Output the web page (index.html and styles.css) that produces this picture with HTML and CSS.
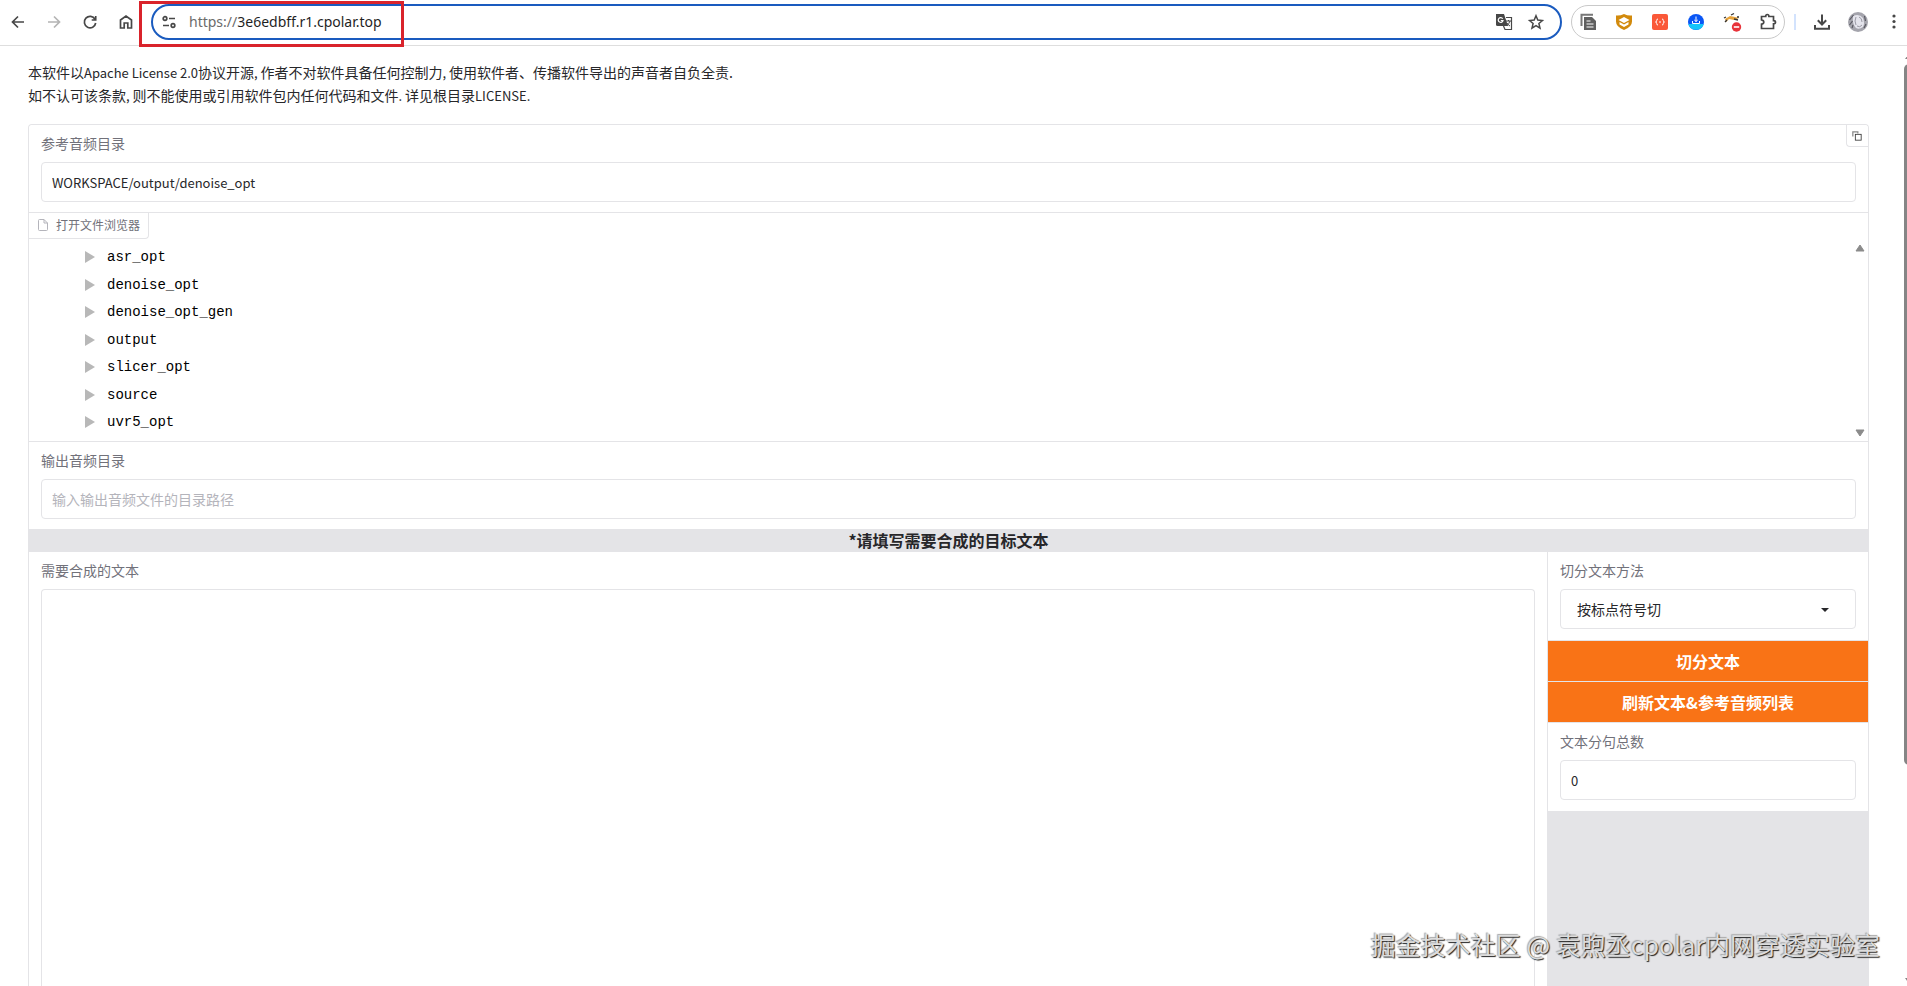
FILE: index.html
```
<!DOCTYPE html>
<html lang="zh-CN">
<head>
    <meta charset="UTF-8">
    <meta name="viewport" content="width=device-width, initial-scale=1.0">
    <title>3e6edbff.r1.cpolar.top</title>
    <link rel="stylesheet" href="styles.css">
</head>
<body>
    <header class="toolbar">
        <button class="icon-btn" aria-label="Back"><svg viewBox="0 0 20 20"><path d="M16 10H4.500M10 4.500L4.500 10l5.500 5.500"/></svg></button>
        <button class="icon-btn disabled" aria-label="Forward"><svg viewBox="0 0 20 20"><path d="M4 10h11.500M10 4.500l5.500 5.500-5.500 5.500"/></svg></button>
        <button class="icon-btn" aria-label="Reload"><svg viewBox="0 0 20 20"><path d="M15 7.200A5.700 5.700 0 1 0 15.700 11M15.700 4v4h-4"/></svg></button>
        <button class="icon-btn" aria-label="Home"><svg viewBox="0 0 20 20"><path d="M4.500 16V8L10 4l5.500 4v8h-3.700v-5H8.200v5z"/></svg></button>
        <div class="omnibox">
            <svg class="icon" viewBox="0 0 20 20"><circle cx="6" cy="6.500" r="1.800"/><path d="M10 6.500h6M4 13.500h6"/><circle cx="14" cy="13.500" r="1.800"/></svg>
            <div class="url" contenteditable="true" role="textbox" aria-label="Address" spellcheck="false"><span class="scheme">https://</span>3e6edbff.r1.cpolar.top</div>
            <button class="icon-btn" aria-label="Translate"><svg viewBox="0 0 20 20"><path d="M2 2h8l4 12H3.500Q2 14 2 12.500z" fill="#474747" stroke="none"/><path d="M12 5.500h5.500v12H11l-1.500-3.500" stroke-width="1.200"/><path d="M8.700 6.700A2.400 2.400 0 1 0 9 8.500H6.800" stroke="#fff" stroke-width="1.200"/><path d="M12 9h5M14.500 8v1M16 9q-1 3-3.500 5M13 11q1 2 3 3" stroke-width="1"/></svg></button>
            <button class="icon-btn" aria-label="Bookmark"><svg viewBox="0 0 20 20"><path d="M10 3.800l1.800 4.300 4.600.4-3.500 3 1.100 4.600-4-2.500-4 2.500 1.100-4.600-3.500-3 4.600-.4z" stroke-width="1.500"/></svg></button>
        </div>
        <div class="extensions">
            <button class="icon-btn" aria-label="Copy pages"><svg viewBox="0 0 20 20"><path d="M3.500 14V2.800H15" stroke="#777" stroke-width="2"/><path d="M6 5h8l4 4v9H6z" fill="#606060" stroke="none"/><path d="M8.500 9h4M8.500 12h7M8.500 15h7" stroke="#fff" stroke-width="1.200"/></svg></button>
            <button class="icon-btn" aria-label="Shield"><svg viewBox="0 0 20 20"><path d="M2 3.500Q6 4 10 2q4 2 8 1.500v6q0 5.500-8 8.500-8-3-8-8.500z" fill="#d28a0c" stroke="none"/><path d="M10 5l5.500 3-5.500 3-5.500-3z" fill="#fff" stroke="none"/><path d="M5.500 10v2.500l4.500 2.500 4.500-2.500V10L10 12.500z" fill="#fff" stroke="none"/></svg></button>
            <button class="icon-btn" aria-label="JSON"><svg viewBox="0 0 20 20"><rect x="2" y="2" width="16" height="16" rx="2" fill="#fa5838" stroke="none"/><path d="M8 7Q6.500 7 6.700 8.500 6.700 10 5.500 10q1.200 0 1.200 1.500Q6.500 13 8 13M12 7q1.500 0 1.300 1.500 0 1.500 1.200 1.500-1.200 0-1.200 1.500.2 1.500-1.300 1.500M9 10h2" stroke="#fff" stroke-width="1"/></svg></button>
            <button class="icon-btn" aria-label="Downloader"><svg viewBox="0 0 20 20"><circle cx="10" cy="10" r="8" fill="#0a56f5" stroke="none"/><path d="M2.300 12h15.400a8 8 0 0 1-15.400 0z" fill="#13c5fa" stroke="none"/><path d="M10 4.500v5M8.300 8L10 9.500 11.700 8M6.500 9v2.500h7V9" stroke="#fff" stroke-width="1"/></svg></button>
            <button class="icon-btn" aria-label="Blocker"><svg viewBox="0 0 20 20"><path d="M3 7l5-3 5 1 4 1-5 2-5-1-3 3z" fill="#e8a33a" stroke="none"/><path d="M2 6l2-1M9 3l3-1.500M3 10l2-2M15 5h2M12 7l4 1" stroke="#333" stroke-width="1.300"/><circle cx="14.500" cy="15" r="4.700" fill="#e8333a" stroke="none"/><path d="M11.800 15h5.400" stroke="#fff" stroke-width="1.600"/></svg></button>
            <button class="icon-btn" aria-label="Extensions"><svg viewBox="0 0 20 20"><path d="M3.500 4.500h4.200q0-2 1.600-2t1.600 2h4.600v4.200q2 0 2 1.600t-2 1.600v4.600h-12v-4.300q2.300-.4 2.300-2.200t-2.300-2.200z"/></svg></button>
        </div>
        <span class="separator"></span>
        <button class="icon-btn" aria-label="Downloads"><svg viewBox="0 0 20 20"><path d="M10 2.500v10M5.800 8.300l4.200 4.200 4.200-4.200M3 13v3.700h14V13" stroke-width="2"/></svg></button>
        <button class="icon-btn" aria-label="Profile"><svg viewBox="0 0 20 20"><circle cx="10" cy="10" r="10" fill="#a4a4ac" stroke="none"/><path d="M5 4q6-3 10 2 2 5 0 9-4 3-7 1-4-4-3-12z" fill="#e4e4ec" stroke="none"/><path d="M1.500 8l4-5M1.500 13l3-4M4 16l1-3M16.500 4l1 5M18 12l-2 4" stroke="#5a5a63" stroke-width="1.200"/><path d="M8 5q-2 4 0 8M11 5q3 1 3 5M9 14q3 2 5-1" stroke="#9a9aa4" stroke-width="1"/></svg></button>
        <button class="icon-btn" aria-label="Menu"><svg viewBox="0 0 20 20"><g fill="#474747" stroke="none"><circle cx="10" cy="4" r="1.600"/><circle cx="10" cy="9.500" r="1.600"/><circle cx="10" cy="15" r="1.600"/></g></svg></button>
        <span class="highlight"></span>
    </header>

    <div class="viewport">
        <main class="page">
            <p class="notice">本软件以<span class="latin">Apache License 2.0</span>协议开源<span class="latin">, </span>作者不对软件具备任何控制力<span class="latin">, </span>使用软件者、传播软件导出的声音者自负全责.<br>如不认可该条款<span class="latin">, </span>则不能使用或引用软件包内任何代码和文件<span class="latin">. </span>详见根目录<span class="latin">LICENSE.</span></p>

            <div class="panel">
                <div class="field ref-dir">
                    <label for="ref-dir">参考音频目录</label>
                    <input type="text" id="ref-dir" class="latin" value="WORKSPACE/output/denoise_opt">
                    <button class="copy-btn" aria-label="Copy"><svg viewBox="0 0 12 12"><path d="M1 6.500V1h6v2" fill="none" stroke="#888" stroke-width="1.500"/><rect x="4" y="4" width="7" height="7" fill="#fff" stroke="#333"/></svg></button>
                </div>

                <div class="explorer">
                    <div class="explorer-label">
                        <svg viewBox="0 0 12 14"><path d="M1.500 2.500q0-1 1-1H7l3.500 3.500v6.500q0 1-1 1h-7q-1 0-1-1zM7 1.500V5h3.500"/></svg>
                        打开文件浏览器
                    </div>
                    <div class="explorer-body">
                        <ul class="tree">
                            <li>asr_opt</li>
                            <li>denoise_opt</li>
                            <li>denoise_opt_gen</li>
                            <li>output</li>
                            <li>slicer_opt</li>
                            <li>source</li>
                            <li>uvr5_opt</li>
                        </ul>
                        <div class="tree-scroll">
                            <svg viewBox="0 0 10 8"><path d="M5 1l4 6H1z"/></svg>
                            <svg viewBox="0 0 10 8"><path d="M5 7L1 1h8z"/></svg>
                        </div>
                    </div>
                </div>

                <div class="field">
                    <label for="out-dir">输出音频目录</label>
                    <input type="text" id="out-dir" placeholder="输入输出音频文件的目录路径">
                </div>

                <h3 class="band">*请填写需要合成的目标文本</h3>

                <div class="columns">
                    <div class="field text-col">
                        <label for="target-text">需要合成的文本</label>
                        <textarea id="target-text"></textarea>
                    </div>
                    <div class="side-col">
                        <div class="field">
                            <label for="cut-method">切分文本方法</label>
                            <div class="select-wrap">
                                <select id="cut-method">
                                    <option>按标点符号切</option>
                                </select>
                                <svg viewBox="0 0 10 6"><path d="M1 1h8L5 5z"/></svg>
                            </div>
                        </div>
                        <button class="primary">切分文本</button>
                        <button class="primary">刷新文本&amp;参考音频列表</button>
                        <div class="field">
                            <label for="count">文本分句总数</label>
                            <input type="text" id="count" class="latin" value="0">
                        </div>
                    </div>
                </div>
            </div>
        </main>
        <div class="scrollbar">
            <svg viewBox="0 0 12 8"><path d="M6 0l5 7H1z"/></svg>
            <div class="track"><div class="thumb"></div></div>
            <svg viewBox="0 0 12 8"><path d="M6 7L1 0h10z"/></svg>
        </div>
    </div>

    <div class="watermark">掘金技术社区 @ 袁煦丞cpolar内网穿透实验室</div>
</body>
</html>
```
FILE: styles.css
```
* {
    box-sizing: border-box;
}
body {
    margin: 0;
    height: 100vh;
    overflow: hidden;
    display: flex;
    flex-direction: column;
    background: #fff;
    color: #27272a;
    font-family: "Noto Sans CJK SC", sans-serif;
    font-size: 14px;
}
button, input, select, textarea {
    font: inherit;
    color: inherit;
}

/* latin glyphs run large next to the chinese ones */
.latin {
    font-size: 13px;
}

/* browser bar */
.toolbar {
    position: relative;
    flex: none;
    display: flex;
    align-items: center;
    gap: 16px;
    height: 46px;
    padding: 0 3px 2px 8px;
    border-bottom: 1px solid #dedede;
}
.icon-btn {
    flex: none;
    width: 20px;
    height: 20px;
    padding: 0;
    border: 0;
    background: none;
}
.icon-btn svg, .icon {
    display: block;
    width: 20px;
    height: 20px;
    fill: none;
    stroke: #474747;
    stroke-width: 1.7;
}
.disabled svg {
    stroke: #b4b4b4;
}
.omnibox {
    flex: 1;
    display: flex;
    align-items: center;
    gap: 10px;
    height: 36px;
    margin: 0 -7px 0 -1px;
    padding: 0 14px 0 6px;
    border: 2px solid #1a5bbf;
    border-radius: 18px;
}
.url {
    flex: 1;
    font-family: "Noto Sans", sans-serif;
    font-size: 14px;
    line-height: 20px;
    color: #1f1f1f;
    outline: none;
}
.scheme {
    color: #6b6b6b;
}
.omnibox .icon-btn + .icon-btn {
    margin-left: 2px;
}
.extensions {
    flex: none;
    display: flex;
    align-items: center;
    gap: 16px;
    height: 34px;
    margin-right: -7px;
    padding: 0 6px;
    border: 1px solid #c9c9c9;
    border-radius: 17px;
}
.separator {
    width: 2px;
    height: 16px;
    background: #d3e3fd;
}
.highlight {
    position: absolute;
    left: 139px;
    top: 1px;
    width: 265px;
    height: 46px;
    border: 3px solid #d9232b;
    pointer-events: none;
}

/* page */
.viewport {
    flex: 1;
    min-height: 0;
    display: flex;
}
.page {
    flex: 1;
    min-width: 0;
    display: flex;
    flex-direction: column;
    padding: 15px 35px 0 28px;
}
.notice {
    margin: 0 0 17px;
    line-height: 23px;
}
.panel {
    flex: 1;
    min-height: 0;
    display: flex;
    flex-direction: column;
    border: 1px solid #e4e4e7;
    border-bottom: 0;
    border-radius: 4px 4px 0 0;
}
.field {
    display: flex;
    flex-direction: column;
    gap: 9px;
    padding: 8px 12px 10px;
    background: #fff;
}
.field label {
    line-height: 20px;
    color: #71717a;
}
.field input, .field textarea, .field select {
    display: block;
    width: 100%;
    height: 40px;
    padding: 0 10px;
    border: 1px solid #e4e4e7;
    border-radius: 4px;
    background: #fff;
    outline: none;
}
.field .latin {
    font-size: 13px;
}
.field input::placeholder {
    color: #b4b4bb;
}
.ref-dir {
    position: relative;
    border-radius: 4px 4px 0 0;
}
.copy-btn {
    position: absolute;
    top: 0;
    right: 0;
    width: 22px;
    height: 22px;
    padding: 5px;
    border: solid #e4e4e7;
    border-width: 0 0 1px 1px;
    border-radius: 0 4px 0 4px;
    background: #fff;
}
.copy-btn svg {
    display: block;
    width: 10px;
    height: 10px;
}

/* file explorer */
.explorer {
    border: solid #e4e4e7;
    border-width: 1px 0;
}
.explorer-label {
    display: flex;
    align-items: center;
    gap: 7px;
    width: max-content;
    height: 26px;
    padding: 0 8px 2px;
    border: solid #e4e4e7;
    border-width: 0 1px 1px 0;
    border-radius: 0 0 4px 0;
    font-size: 12px;
    color: #71717a;
}
.explorer-label svg {
    width: 12px;
    height: 14px;
    fill: none;
    stroke: #b4b4bb;
}
.explorer-body {
    display: flex;
    justify-content: space-between;
    height: 202px;
}
.tree {
    display: flex;
    flex-direction: column;
    justify-content: space-between;
    margin: 0;
    padding: 8px 0 9px 56px;
    list-style: none;
    font-family: "Liberation Mono", monospace;
    line-height: 20px;
    color: #000;
}
.tree li {
    display: flex;
    align-items: center;
    gap: 12px;
}
.tree li::before {
    content: "";
    border: solid transparent;
    border-width: 6px 0 6px 10px;
    border-left-color: #b8b8b8;
}
.tree-scroll {
    display: flex;
    flex-direction: column;
    justify-content: space-between;
    padding: 5px 3px 4px;
}
.tree-scroll svg {
    width: 10px;
    height: 8px;
    fill: #8b8b8b;
    stroke: #8b8b8b;
    stroke-linejoin: round;
}

/* synthesis text */
.band {
    margin: 0;
    background: #e4e4e7;
    font-size: 16px;
    font-weight: 700;
    line-height: 22px;
    text-align: center;
}
.columns {
    flex: 1;
    min-height: 0;
    display: flex;
    border-top: 1px solid #e4e4e7;
}
.text-col {
    flex: 1;
    padding-bottom: 0;
}
.field textarea {
    flex: 1;
    border-bottom: 0;
    border-radius: 4px 4px 0 0;
    resize: none;
}
.side-col {
    flex: none;
    display: flex;
    flex-direction: column;
    gap: 1px;
    width: 321px;
    border-left: 1px solid #e4e4e7;
    background: #e4e4e7;
}
.side-col .field {
    padding-bottom: 11px;
}
.select-wrap {
    position: relative;
}
.field select {
    appearance: none;
    padding: 0 16px;
}
.select-wrap svg {
    position: absolute;
    right: 26px;
    top: 18px;
    width: 10px;
    height: 6px;
    fill: #27272a;
}
.primary {
    height: 40px;
    padding: 0;
    border: 0;
    background: #f97316;
    color: #fff;
    font-size: 16px;
    font-weight: 600;
}

/* window scrollbar, cut off by the window edge */
.scrollbar {
    flex: none;
    display: flex;
    flex-direction: column;
    gap: 4px;
    width: 12px;
    margin-right: -9px;
    padding: 6px 0 0;
}
.scrollbar svg {
    width: 12px;
    height: 8px;
    fill: #858585;
}
.track {
    flex: 1;
}
.thumb {
    height: 77%;
    border-radius: 5px;
    background: #858585;
}

.watermark {
    position: absolute;
    right: 27px;
    bottom: 24px;
    font-size: 25px;
    line-height: 36px;
    color: #dcdcdc;
    text-shadow: 1px 1px 1px #222, -1px -1px 1px #aaa;
    pointer-events: none;
}
```
